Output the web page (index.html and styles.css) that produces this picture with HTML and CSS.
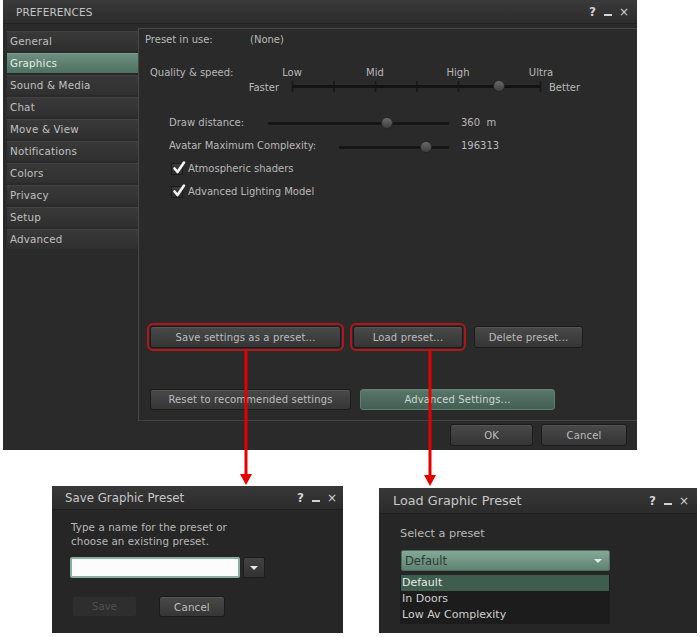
FILE: index.html
```html
<!DOCTYPE html>
<html>
<head>
<meta charset="utf-8">
<link rel="stylesheet" href="styles.css">
</head>
<body>
<div class="canvas">
  <div class="win main">
    <div class="titlebar">
      <span class="title">PREFERENCES</span>
      <span class="ctrls"><span class="q">?</span><span class="min"></span><span class="x">×</span></span>
    </div>
    <div class="mainbody">
      <ul class="tabs">
        <li>General</li>
        <li class="sel">Graphics</li>
        <li>Sound &amp; Media</li>
        <li>Chat</li>
        <li>Move &amp; View</li>
        <li>Notifications</li>
        <li>Colors</li>
        <li>Privacy</li>
        <li>Setup</li>
        <li>Advanced</li>
      </ul>
      <div class="panel">
        <div class="preset"><span class="preset-lbl">Preset in use:</span><span>(None)</span></div>
        <div class="quality">
          <div class="qtop">
            <span class="qlabel">Quality &amp; speed:</span>
            <div class="qmarks"><span>Low</span><span>Mid</span><span>High</span><span>Ultra</span></div>
          </div>
          <div class="qbottom">
            <span class="faster">Faster</span>
            <svg class="qtrack" width="257" height="14" viewBox="0 0 257 14">
              <line x1="4" y1="6.5" x2="253" y2="6.5" stroke="#131313" stroke-width="3"/>
              <g stroke="#161616" stroke-width="1.5">
                <line x1="4.5" y1="1" x2="4.5" y2="12"/>
                <line x1="46" y1="1" x2="46" y2="12"/>
                <line x1="87.5" y1="1" x2="87.5" y2="12"/>
                <line x1="129" y1="1" x2="129" y2="12"/>
                <line x1="170.5" y1="1" x2="170.5" y2="12"/>
                <line x1="252.5" y1="1" x2="252.5" y2="12"/>
              </g>
              <circle cx="211" cy="6" r="5.5" fill="url(#kg)" stroke="#222" stroke-width="0.8"/>
              <defs>
                <linearGradient id="kg" x1="0" y1="0" x2="0" y2="1">
                  <stop offset="0" stop-color="#6c6c6c"/>
                  <stop offset="1" stop-color="#3c3c3c"/>
                </linearGradient>
              </defs>
            </svg>
            <span class="better">Better</span>
          </div>
        </div>
        <div class="srow first">
          <span class="slbl">Draw distance:</span>
          <svg class="strack" width="189" height="14" viewBox="0 0 189 14">
            <line x1="4" y1="7.5" x2="185" y2="7.5" stroke="#131313" stroke-width="2.5"/>
            <circle cx="123" cy="7" r="5.5" fill="url(#kg)" stroke="#222" stroke-width="0.8"/>
          </svg>
          <span class="val">360&nbsp;&nbsp;m</span>
        </div>
        <div class="srow second">
          <span class="slbl">Avatar Maximum Complexity:</span>
          <svg class="strack" width="118" height="14" viewBox="0 0 118 14">
            <line x1="4" y1="8.5" x2="114" y2="8.5" stroke="#131313" stroke-width="2.5"/>
            <circle cx="91" cy="8" r="5.5" fill="url(#kg)" stroke="#222" stroke-width="0.8"/>
          </svg>
          <span class="val">196313</span>
        </div>
        <div class="check">
          <span class="box"><svg width="16" height="16" viewBox="0 0 16 16"><path d="M3.5 8.5 L6.5 12 L13 2.5" fill="none" stroke="#f2f2f2" stroke-width="2.6" stroke-linecap="round" stroke-linejoin="round"/></svg></span>
          <span>Atmospheric shaders</span>
        </div>
        <div class="check">
          <span class="box"><svg width="16" height="16" viewBox="0 0 16 16"><path d="M3.5 8.5 L6.5 12 L13 2.5" fill="none" stroke="#f2f2f2" stroke-width="2.6" stroke-linecap="round" stroke-linejoin="round"/></svg></span>
          <span>Advanced Lighting Model</span>
        </div>
        <div class="btnrow r1">
          <button class="btn mark b-save">Save settings as a preset...</button>
          <button class="btn mark b-load">Load preset...</button>
          <button class="btn b-del">Delete preset...</button>
        </div>
        <div class="btnrow r2">
          <button class="btn b-reset">Reset to recommended settings</button>
          <button class="btn green b-adv">Advanced Settings...</button>
        </div>
      </div>
    </div>
    <div class="footer">
      <button class="btn b-ok">OK</button>
      <button class="btn b-cancel">Cancel</button>
    </div>
  </div>

  <div class="dialogs">
    <div class="win dlg save">
      <div class="dtitle">
        <span class="title">Save Graphic Preset</span>
        <span class="ctrls"><span class="q">?</span><span class="min"></span><span class="x">×</span></span>
      </div>
      <div class="dbody">
        <p class="hint">Type a name for the preset or<br>choose an existing preset.</p>
        <div class="inrow">
          <div class="input"></div>
          <div class="ddbtn"><span class="tri"></span></div>
        </div>
        <div class="dbtns">
          <button class="btn disabled b-dsave">Save</button>
          <button class="btn b-dcancel">Cancel</button>
        </div>
      </div>
    </div>
    <div class="win dlg load">
      <div class="dtitle">
        <span class="title">Load Graphic Preset</span>
        <span class="ctrls"><span class="q">?</span><span class="min"></span><span class="x">×</span></span>
      </div>
      <div class="dbody">
        <p class="sel-lbl">Select a preset</p>
        <div class="combo"><span>Default</span><span class="tri"></span></div>
        <ul class="list">
          <li class="on">Default</li>
          <li>In Doors</li>
          <li>Low Av Complexity</li>
        </ul>
      </div>
    </div>
  </div>

  <svg class="arrows" width="700" height="637" viewBox="0 0 700 637">
    <line x1="246" y1="351" x2="246" y2="476" stroke="#e30000" stroke-width="3"/>
    <polygon points="240,474 252,474 246,485" fill="#e30000"/>
    <line x1="430" y1="351" x2="430" y2="477" stroke="#e30000" stroke-width="3"/>
    <polygon points="424,475 436,475 430,486" fill="#e30000"/>
  </svg>
</div>
</body>
</html>
```

FILE: styles.css
```css
* { box-sizing: border-box; }
html, body { margin: 0; padding: 0; background: #ffffff; }
body {
  font-family: "DejaVu Sans", "Liberation Sans", sans-serif;
  font-size: 10px;
  color: #b8b8b8;
}
.canvas {
  position: relative;
  width: 700px;
  height: 637px;
  overflow: hidden;
}

/* ---------- main window ---------- */
.main {
  margin-left: 3px;
  width: 634px;
  height: 450px;
  background: #2a2a2a;
  display: flex;
  flex-direction: column;
}
.titlebar {
  height: 24px;
  flex: none;
  display: flex;
  align-items: center;
  justify-content: space-between;
  padding: 0 8px 0 13px;
  background: linear-gradient(#3a3a3a, #2c2c2c);
  border-bottom: 1px solid #222;
}
.titlebar .title {
  font-size: 10.5px;
  color: #c4c4c4;
  letter-spacing: 0.1px;
}
.ctrls {
  display: flex;
  align-items: center;
  color: #d2d2d2;
}
.ctrls .q { font-weight: bold; font-size: 12px; }
.ctrls .min {
  display: inline-block;
  width: 8px;
  height: 2px;
  background: #d2d2d2;
  margin: 6px 7px 0 8px;
}
.ctrls .x { font-size: 12px; }

.mainbody {
  height: 397px;
  flex: none;
  display: flex;
}
.tabs {
  list-style: none;
  margin: 0;
  padding: 7px 0 0 4px;
  width: 135px;
  flex: none;
  display: flex;
  flex-direction: column;
  gap: 2px;
}
.tabs li {
  height: 20px;
  padding-left: 3px;
  font-size: 10.3px;
  color: #c0c0c0;
  letter-spacing: 0.2px;
  background: linear-gradient(#393939, #2f2f2f);
  border-top: 1px solid #424242;
  line-height: 18px;
}
.tabs li.sel {
  background: linear-gradient(#6b8f7f, #4f7062);
  border-top-color: #7c9e8f;
  color: #e4ece8;
}

.panel {
  flex: 1;
  margin-top: 4px;
  border-top: 1px solid #474747;
  border-left: 1px solid #474747;
  border-bottom: 1px solid #444;
  background: #2a2a2a;
  display: flex;
  flex-direction: column;
  color: #b9b9b9;
}
.preset {
  height: 20px;
  display: flex;
  align-items: center;
  padding-left: 6px;
}
.preset-lbl { width: 105px; }

.quality { margin-top: 15px; padding-left: 11px; }
.qtop { height: 16px; display: flex; align-items: center; }
.qlabel { width: 100.5px; flex: none; }
.qmarks {
  display: grid;
  grid-template-columns: repeat(4, 83px);
}
.qmarks span { text-align: center; }
.qbottom { height: 14px; display: flex; align-items: center; }
.faster { width: 138px; text-align: right; padding-right: 9px; flex: none; }
.qtrack { flex: none; display: block; }
.better { margin-left: 4px; }

.srow {
  height: 23px;
  display: flex;
  align-items: center;
  padding-left: 30px;
}
.srow.first { margin-top: 17px; }
.slbl { flex: none; }
.strack { display: block; flex: none; }
.srow.first .slbl { width: 95px; }
.srow.second .slbl { width: 166px; }
.val { margin-left: 8px; }

.check {
  height: 23px;
  display: flex;
  align-items: center;
  padding-left: 32px;
}
.box {
  position: relative;
  width: 12px;
  height: 12px;
  flex: none;
  border: 1px solid #1a1a1a;
  background: linear-gradient(#3b3b3b, #2c2c2c);
  margin-right: 5px;
}
.box svg {
  position: absolute;
  left: -1px;
  top: -4px;
}

.btnrow { display: flex; padding-left: 11px; }
.r1 { margin-top: 123px; height: 22px; }
.r2 { margin-top: 41px; height: 21px; }

.btn {
  font-family: "DejaVu Sans", "Liberation Sans", sans-serif;
  font-size: 10px;
  color: #bdbdbd;
  background: linear-gradient(#494949, #353535);
  border: 1px solid #1b1b1b;
  border-radius: 3px;
  box-shadow: inset 0 1px 0 rgba(255,255,255,0.07);
  padding: 0;
  height: 100%;
  letter-spacing: 0.15px;
}
.mark {
  outline: 2px solid #b0161a;
  outline-offset: 1px;
}
.b-save { width: 191px; }
.b-load { width: 110px; margin-left: 12px; }
.b-del { width: 109px; margin-left: 11px; }
.b-reset { width: 201px; }
.b-adv { width: 195px; margin-left: 9px; }
.green {
  background: linear-gradient(#587669, #445e53);
  border-color: #60806f;
  color: #c9d6d0;
}

.footer {
  flex: 1;
  display: flex;
  justify-content: flex-end;
  padding: 3px 10px 4px 0;
  gap: 8px;
}
.b-ok { width: 83px; height: 22px; }
.b-cancel { width: 86px; height: 22px; }

/* ---------- dialogs ---------- */
.dialogs {
  display: flex;
  align-items: flex-start;
  padding: 36px 0 0 52px;
  gap: 36px;
}
.dlg {
  background: #262626;
  display: flex;
  flex-direction: column;
}
.dtitle {
  display: flex;
  align-items: center;
  justify-content: space-between;
  background: linear-gradient(#383838, #2b2b2b);
  border-bottom: 1px solid #1f1f1f;
  flex: none;
}
.dtitle .title { color: #c8c8c8; }
.save { width: 291px; height: 147px; }
.save .dtitle { height: 24px; padding: 0 6px 0 13px; }
.save .dtitle .title { font-size: 11.8px; }
.load { width: 318px; height: 145px; margin-top: 2px; }
.load .dtitle { height: 26px; padding: 0 8px 0 14px; }
.load .dtitle .title { font-size: 12.8px; }

.save .dbody { padding-left: 18px; }
.hint {
  margin: 10px 0 0 1px;
  font-size: 10.3px;
  line-height: 14px;
  color: #b8b8b8;
  letter-spacing: 0.1px;
}
.inrow { display: flex; margin-top: 9px; height: 21px; }
.input {
  width: 170px;
  height: 21px;
  background: #fcfcfc;
  border: 2px solid #8bae9e;
  border-radius: 2px;
}
.ddbtn {
  width: 22px;
  height: 21px;
  margin-left: 3px;
  background: linear-gradient(#424242, #323232);
  border: 1px solid #1c1c1c;
  border-radius: 2px;
  display: flex;
  align-items: center;
  justify-content: center;
}
.tri {
  width: 0;
  height: 0;
  border-left: 4px solid transparent;
  border-right: 4px solid transparent;
  border-top: 4px solid #e8e8e8;
}
.dbtns { display: flex; margin-top: 18px; height: 21px; padding-left: 2px; }
.b-dsave { width: 65px; }
.b-dcancel { width: 66px; margin-left: 22px; font-size: 10.3px; }
.disabled {
  background: #2e2e2e;
  border-color: #272727;
  color: #515151;
  box-shadow: none;
}

.load .dbody { padding-left: 21px; }
.sel-lbl {
  margin: 13px 0 0 0;
  font-size: 11.3px;
  line-height: 14px;
  color: #b8b8b8;
}
.combo {
  margin: 9px 0 0 1px;
  width: 209px;
  height: 21px;
  background: linear-gradient(#85a897, #5e8373);
  border: 1px solid #4d6a5d;
  border-radius: 2px;
  display: flex;
  align-items: center;
  justify-content: space-between;
  padding: 0 7px 0 3px;
  font-size: 11.5px;
  color: #2d3b35;
}
.list {
  list-style: none;
  margin: 4px 0 0 0;
  padding: 0 0 1px 0;
  width: 210px;
  background: #1c1c1c;
}
.list li {
  height: 16px;
  line-height: 16px;
  padding-left: 2px;
  font-size: 11px;
  color: #cfcfcf;
}
.list li.on {
  background: #3e5d4f;
  color: #e6ece9;
  margin-left: 1px;
  width: 208px;
  padding-left: 1px;
}

.arrows {
  position: absolute;
  left: 0;
  top: 0;
  pointer-events: none;
}
```
